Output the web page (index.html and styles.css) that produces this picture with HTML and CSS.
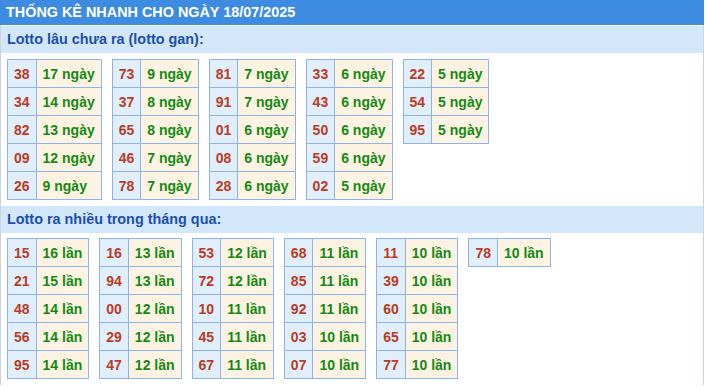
FILE: index.html
```html
<!DOCTYPE html>
<html lang="vi">
<head>
<meta charset="utf-8">
<title>Thống kê nhanh</title>
<link rel="stylesheet" href="styles.css">
</head>
<body>
<div class="box">
  <div class="title">THỐNG KÊ NHANH CHO NGÀY 18/07/2025</div>
  <div class="sec-head">Lotto lâu chưa ra (lotto gan):</div>
  <div class="tables tables-first">
    <table>
      <tr><td class="num">38</td><td class="val">17 ngày</td></tr>
      <tr><td class="num">34</td><td class="val">14 ngày</td></tr>
      <tr><td class="num">82</td><td class="val">13 ngày</td></tr>
      <tr><td class="num">09</td><td class="val">12 ngày</td></tr>
      <tr><td class="num">26</td><td class="val">9 ngày</td></tr>
    </table>
    <table>
      <tr><td class="num">73</td><td class="val">9 ngày</td></tr>
      <tr><td class="num">37</td><td class="val">8 ngày</td></tr>
      <tr><td class="num">65</td><td class="val">8 ngày</td></tr>
      <tr><td class="num">46</td><td class="val">7 ngày</td></tr>
      <tr><td class="num">78</td><td class="val">7 ngày</td></tr>
    </table>
    <table>
      <tr><td class="num">81</td><td class="val">7 ngày</td></tr>
      <tr><td class="num">91</td><td class="val">7 ngày</td></tr>
      <tr><td class="num">01</td><td class="val">6 ngày</td></tr>
      <tr><td class="num">08</td><td class="val">6 ngày</td></tr>
      <tr><td class="num">28</td><td class="val">6 ngày</td></tr>
    </table>
    <table>
      <tr><td class="num">33</td><td class="val">6 ngày</td></tr>
      <tr><td class="num">43</td><td class="val">6 ngày</td></tr>
      <tr><td class="num">50</td><td class="val">6 ngày</td></tr>
      <tr><td class="num">59</td><td class="val">6 ngày</td></tr>
      <tr><td class="num">02</td><td class="val">5 ngày</td></tr>
    </table>
    <table>
      <tr><td class="num">22</td><td class="val">5 ngày</td></tr>
      <tr><td class="num">54</td><td class="val">5 ngày</td></tr>
      <tr><td class="num">95</td><td class="val">5 ngày</td></tr>
    </table>
  </div>
  <div class="sec-head">Lotto ra nhiều trong tháng qua:</div>
  <div class="tables">
    <table>
      <tr><td class="num">15</td><td class="val">16 lần</td></tr>
      <tr><td class="num">21</td><td class="val">15 lần</td></tr>
      <tr><td class="num">48</td><td class="val">14 lần</td></tr>
      <tr><td class="num">56</td><td class="val">14 lần</td></tr>
      <tr><td class="num">95</td><td class="val">14 lần</td></tr>
    </table>
    <table>
      <tr><td class="num">16</td><td class="val">13 lần</td></tr>
      <tr><td class="num">94</td><td class="val">13 lần</td></tr>
      <tr><td class="num">00</td><td class="val">12 lần</td></tr>
      <tr><td class="num">29</td><td class="val">12 lần</td></tr>
      <tr><td class="num">47</td><td class="val">12 lần</td></tr>
    </table>
    <table>
      <tr><td class="num">53</td><td class="val">12 lần</td></tr>
      <tr><td class="num">72</td><td class="val">12 lần</td></tr>
      <tr><td class="num">10</td><td class="val">11 lần</td></tr>
      <tr><td class="num">45</td><td class="val">11 lần</td></tr>
      <tr><td class="num">67</td><td class="val">11 lần</td></tr>
    </table>
    <table>
      <tr><td class="num">68</td><td class="val">11 lần</td></tr>
      <tr><td class="num">85</td><td class="val">11 lần</td></tr>
      <tr><td class="num">92</td><td class="val">11 lần</td></tr>
      <tr><td class="num">03</td><td class="val">10 lần</td></tr>
      <tr><td class="num">07</td><td class="val">10 lần</td></tr>
    </table>
    <table>
      <tr><td class="num">11</td><td class="val">10 lần</td></tr>
      <tr><td class="num">39</td><td class="val">10 lần</td></tr>
      <tr><td class="num">60</td><td class="val">10 lần</td></tr>
      <tr><td class="num">65</td><td class="val">10 lần</td></tr>
      <tr><td class="num">77</td><td class="val">10 lần</td></tr>
    </table>
    <table>
      <tr><td class="num">78</td><td class="val">10 lần</td></tr>
    </table>
  </div>
</div>
</body>
</html>
```
FILE: styles.css
```css
html, body {
  margin: 0;
  padding: 0;
  background: #ffffff;
}
body {
  font-family: "Liberation Sans", Arial, sans-serif;
  font-size: 14px;
}
.box {
  width: 702px;
  border-left: 1px solid #c9d3e1;
  border-right: 1px solid #c9d3e1;
}
.title {
  background: #3e8ce1;
  color: #ffffff;
  font-weight: bold;
  font-size: 14.4px;
  height: 25px;
  line-height: 25px;
  padding-left: 6px;
  margin: 0 -1px 1px;
}
.sec-head {
  background: #d3e7fb;
  color: #1c4fae;
  font-weight: bold;
  font-size: 14.4px;
  height: 27px;
  line-height: 27px;
  padding-left: 6px;
}
.tables {
  display: flex;
  align-items: flex-start;
  gap: 10px;
  padding: 5px 6px 6px;
}
.tables-first {
  padding-top: 6px;
}
table {
  border-collapse: collapse;
}
td {
  border: 1px solid #8db4ef;
  height: 27px;
  padding: 0 6px;
  font-weight: bold;
  font-size: 14px;
  line-height: 16px;
  white-space: nowrap;
}
td.num {
  background: #e1eefc;
  color: #b93d1f;
}
td.val {
  background: #fdf3e2;
  color: #148a14;
}
```
